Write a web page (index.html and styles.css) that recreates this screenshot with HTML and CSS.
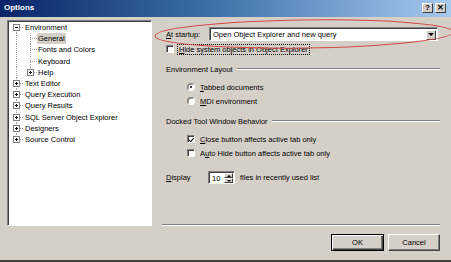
FILE: index.html
```html
<!DOCTYPE html>
<html lang="en">
<head>
  <meta charset="UTF-8">
  <title>Options</title>
  <link rel="stylesheet" href="styles.css">
</head>
<body>
  <div class="window">
    <div class="titlebar">
      <span class="title">Options</span>
      <span class="tbtns">
        <span class="tbtn">?</span>
        <span class="tbtn">&#x2715;</span>
      </span>
    </div>

    <div class="main">
      <div class="tree">
        <div class="row"><span class="cell first"><span class="exp minus"></span></span><span class="label">Environment</span></div>
        <div class="row"><span class="cell pipe"></span><span class="cell tee"></span><span class="label selected">General</span></div>
        <div class="row"><span class="cell pipe"></span><span class="cell tee"></span><span class="label">Fonts and Colors</span></div>
        <div class="row"><span class="cell pipe"></span><span class="cell tee"></span><span class="label">Keyboard</span></div>
        <div class="row"><span class="cell pipe"></span><span class="cell end"><span class="exp"></span></span><span class="label">Help</span></div>
        <div class="row"><span class="cell tee"><span class="exp"></span></span><span class="label">Text Editor</span></div>
        <div class="row"><span class="cell tee"><span class="exp"></span></span><span class="label">Query Execution</span></div>
        <div class="row"><span class="cell tee"><span class="exp"></span></span><span class="label">Query Results</span></div>
        <div class="row"><span class="cell tee"><span class="exp"></span></span><span class="label">SQL Server Object Explorer</span></div>
        <div class="row"><span class="cell tee"><span class="exp"></span></span><span class="label">Designers</span></div>
        <div class="row"><span class="cell end"><span class="exp"></span></span><span class="label">Source Control</span></div>
      </div>

      <div class="panel">
        <div class="startup">
          <span class="field-label"><u>A</u>t startup:</span>
          <div class="combo">
            <span class="combo-text">Open Object Explorer and new query</span>
            <span class="drop"><span class="arrow"></span></span>
          </div>
        </div>

        <div class="check top">
          <span class="box"></span>
          <span class="focus"><u>H</u>ide system objects in Object Explorer</span>
        </div>

        <div class="group">Environment Layout</div>
        <div class="opt first-opt"><span class="radio on"></span><span><u>T</u>abbed documents</span></div>
        <div class="opt"><span class="radio"></span><span><u>M</u>DI environment</span></div>

        <div class="group">Docked Tool Window Behavior</div>
        <div class="opt first-opt"><span class="box checked"></span><span><u>C</u>lose button affects active tab only</span></div>
        <div class="opt"><span class="box"></span><span>A<u>u</u>to Hide button affects active tab only</span></div>

        <div class="display">
          <span class="field-label short"><u>D</u>isplay</span>
          <div class="spin">
            <span class="spin-text">10</span>
            <span class="spin-btns"><span class="up"></span><span class="down"></span></span>
          </div>
          <span>files in recently used list</span>
        </div>

        <div class="sep"></div>
      </div>
    </div>

    <div class="footer">
      <button class="btn default">OK</button>
      <button class="btn">Cancel</button>
    </div>

    <svg class="ring" width="451" height="262" viewBox="0 0 451 262">
      <ellipse cx="304" cy="34" rx="149" ry="14" fill="none" stroke="#d24848" stroke-width="1" transform="rotate(-0.8 304 34)"/>
    </svg>
  </div>
</body>
</html>
```

FILE: styles.css
```css
:root {
  --face: #d4d0c8;
  --shadow: #808080;
  --dark: #404040;
  --line: #a0a0a0;
}

* {
  box-sizing: border-box;
}

body {
  margin: 0;
  font-family: 'Liberation Sans', Arial, sans-serif;
  font-size: 7.5px;
  color: #000;
}

u {
  text-decoration: underline;
  text-underline-offset: 1px;
}

.window {
  position: relative;
  width: 451px;
  height: 262px;
  background: var(--face);
  border-bottom: 2px solid var(--dark);
  overflow: hidden;
}

/* title bar */
.titlebar {
  height: 17px;
  display: flex;
  align-items: center;
  justify-content: space-between;
  padding: 0 5px 2px 4px;
  background: linear-gradient(to right, #0a246a, #3a6ea5 45%, #a6caf0);
}

.title {
  color: #fff;
  font-weight: bold;
  font-size: 8px;
}

.tbtns {
  display: flex;
  gap: 2px;
}

.tbtn {
  width: 11px;
  height: 10px;
  display: flex;
  align-items: center;
  justify-content: center;
  background: var(--face);
  font-weight: bold;
  font-size: 8px;
  border: 1px solid;
  border-color: #fff var(--dark) var(--dark) #fff;
}

/* body */
.main {
  display: flex;
  gap: 10px;
  padding: 3px 11px 0 7px;
}

.tree {
  width: 145px;
  height: 206px;
  background: #fff;
  border: 1px solid;
  border-color: var(--shadow) #fff #fff var(--shadow);
  box-shadow: inset 1px 1px var(--dark);
  padding: 1px 0 0 1px;
}

.row {
  display: flex;
  align-items: center;
  height: 11.2px;
}

.cell {
  width: 15px;
  height: 100%;
  display: flex;
  align-items: center;
  justify-content: center;
  flex-shrink: 0;
}

.cell + .cell {
  width: 13px;
}

.pipe {
  background: repeating-linear-gradient(to bottom, var(--line) 0 1px, transparent 1px 2px) 7px 0 / 1px 100% no-repeat;
}

.cell + .pipe,
.cell + .tee,
.cell + .end {
  background-position-x: 6px;
}

.tee {
  background:
    repeating-linear-gradient(to bottom, var(--line) 0 1px, transparent 1px 2px) 7px 0 / 1px 100% no-repeat,
    repeating-linear-gradient(to right, var(--line) 0 1px, transparent 1px 2px) 7px 50% / 8px 1px no-repeat;
}

.end {
  background:
    repeating-linear-gradient(to bottom, var(--line) 0 1px, transparent 1px 2px) 7px 0 / 1px 50% no-repeat,
    repeating-linear-gradient(to right, var(--line) 0 1px, transparent 1px 2px) 7px 50% / 8px 1px no-repeat;
}

.first {
  background:
    repeating-linear-gradient(to bottom, var(--line) 0 1px, transparent 1px 2px) 7px 100% / 1px 50% no-repeat,
    repeating-linear-gradient(to right, var(--line) 0 1px, transparent 1px 2px) 7px 50% / 8px 1px no-repeat;
}

.exp {
  width: 7px;
  height: 7px;
  border: 1px solid var(--shadow);
  background:
    linear-gradient(#000, #000) center / 3px 1px no-repeat,
    linear-gradient(#000, #000) center / 1px 3px no-repeat,
    #fff;
}

.exp.minus {
  background:
    linear-gradient(#000, #000) center / 3px 1px no-repeat,
    #fff;
}

.label {
  padding: 1px 1px;
  margin-left: 0;
  white-space: nowrap;
  line-height: 9px;
}

.selected {
  background: var(--face);
}

/* right panel */
.panel {
  flex: 1;
  height: 206px;
  display: flex;
  flex-direction: column;
}

.startup {
  display: flex;
  align-items: center;
  margin-top: 7px;
  height: 14px;
  padding-left: 4px;
  padding-right: 2px;
}

.field-label {
  width: 43px;
  flex-shrink: 0;
}

.field-label.short {
  width: 42px;
}

.combo {
  flex: 1;
  height: 14px;
  display: flex;
  align-items: center;
  background: #fff;
  border: 1px solid;
  border-color: var(--shadow) #fff #fff var(--shadow);
  box-shadow: inset 1px 1px var(--dark);
  padding: 2px 1px 1px 3px;
}

.combo-text {
  flex: 1;
}

.drop {
  width: 10px;
  height: 10px;
  display: flex;
  align-items: center;
  justify-content: center;
  background: var(--face);
  border: 1px solid;
  border-color: #fff var(--dark) var(--dark) #fff;
}

.arrow {
  border-left: 3px solid transparent;
  border-right: 3px solid transparent;
  border-top: 3px solid #000;
}

.check,
.opt {
  display: flex;
  align-items: center;
  height: 10px;
}

.check.top {
  margin-top: 3px;
  padding-left: 4px;
  gap: 4px;
}

.opt {
  margin-top: 4px;
  padding-left: 25px;
  gap: 5px;
}

.opt.first-opt {
  margin-top: 8px;
}

.box {
  width: 8px;
  height: 8px;
  background: #fff;
  border: 1px solid;
  border-color: var(--shadow) #fff #fff var(--shadow);
  box-shadow: inset 1px 1px var(--dark);
  flex-shrink: 0;
  position: relative;
}

.box.checked::after {
  content: "";
  position: absolute;
  left: 1.5px;
  top: 0.5px;
  width: 2px;
  height: 3.5px;
  border-right: 1.5px solid #000;
  border-bottom: 1.5px solid #000;
  transform: rotate(40deg);
}

.focus {
  outline: 1px dotted #000;
  padding: 0 1px;
  line-height: 9px;
}

.radio {
  width: 8px;
  height: 8px;
  border-radius: 50%;
  background: #fff;
  border: 1px solid;
  border-color: var(--shadow) #fff #fff var(--shadow);
  box-shadow: inset 0.5px 0.5px var(--dark);
  display: flex;
  align-items: center;
  justify-content: center;
  flex-shrink: 0;
}

.radio.on::after {
  content: "";
  width: 2.5px;
  height: 2.5px;
  border-radius: 50%;
  background: #000;
}

.group {
  display: flex;
  align-items: center;
  margin-top: 10px;
  height: 10px;
  padding-left: 4px;
}

.group::after {
  content: "";
  flex: 1;
  margin-left: 4px;
  border-top: 1px solid var(--shadow);
  border-bottom: 1px solid #fff;
}

.display {
  display: flex;
  align-items: center;
  margin-top: 13px;
  height: 13px;
  padding-left: 4px;
}

.spin {
  width: 27px;
  height: 13px;
  display: flex;
  align-items: center;
  background: #fff;
  border: 1px solid;
  border-color: var(--shadow) #fff #fff var(--shadow);
  box-shadow: inset 1px 1px var(--dark);
  padding: 2px 1px 1px 3px;
  margin-right: 5px;
}

.spin-text {
  flex: 1;
}

.spin-btns {
  display: flex;
  flex-direction: column;
  width: 9px;
  height: 10px;
}

.up,
.down {
  flex: 1;
  background: var(--face);
  border: 1px solid;
  border-color: #fff var(--dark) var(--dark) #fff;
  display: flex;
  align-items: center;
  justify-content: center;
}

.up::after {
  content: "";
  border-left: 2px solid transparent;
  border-right: 2px solid transparent;
  border-bottom: 2px solid #000;
}

.down::after {
  content: "";
  border-left: 2px solid transparent;
  border-right: 2px solid transparent;
  border-top: 2px solid #000;
}

.sep {
  margin-top: auto;
  height: 2px;
  border-top: 1px solid var(--shadow);
  border-bottom: 1px solid #fff;
}

/* buttons */
.footer {
  display: flex;
  justify-content: flex-end;
  gap: 4px;
  padding: 8px 11px 0 0;
}

.btn {
  width: 52px;
  height: 17px;
  padding: 0;
  font-family: inherit;
  font-size: 7.5px;
  color: #000;
  background: var(--face);
  border: 1px solid;
  border-color: #fff var(--dark) var(--dark) #fff;
  box-shadow: inset -1px -1px var(--shadow);
}

.btn.default {
  width: 53px;
  border-color: #000;
  box-shadow: inset 1px 1px #fff, inset -1px -1px var(--dark), inset -2px -2px var(--shadow);
}

.ring {
  position: absolute;
  left: 0;
  top: 0;
  pointer-events: none;
}
```
